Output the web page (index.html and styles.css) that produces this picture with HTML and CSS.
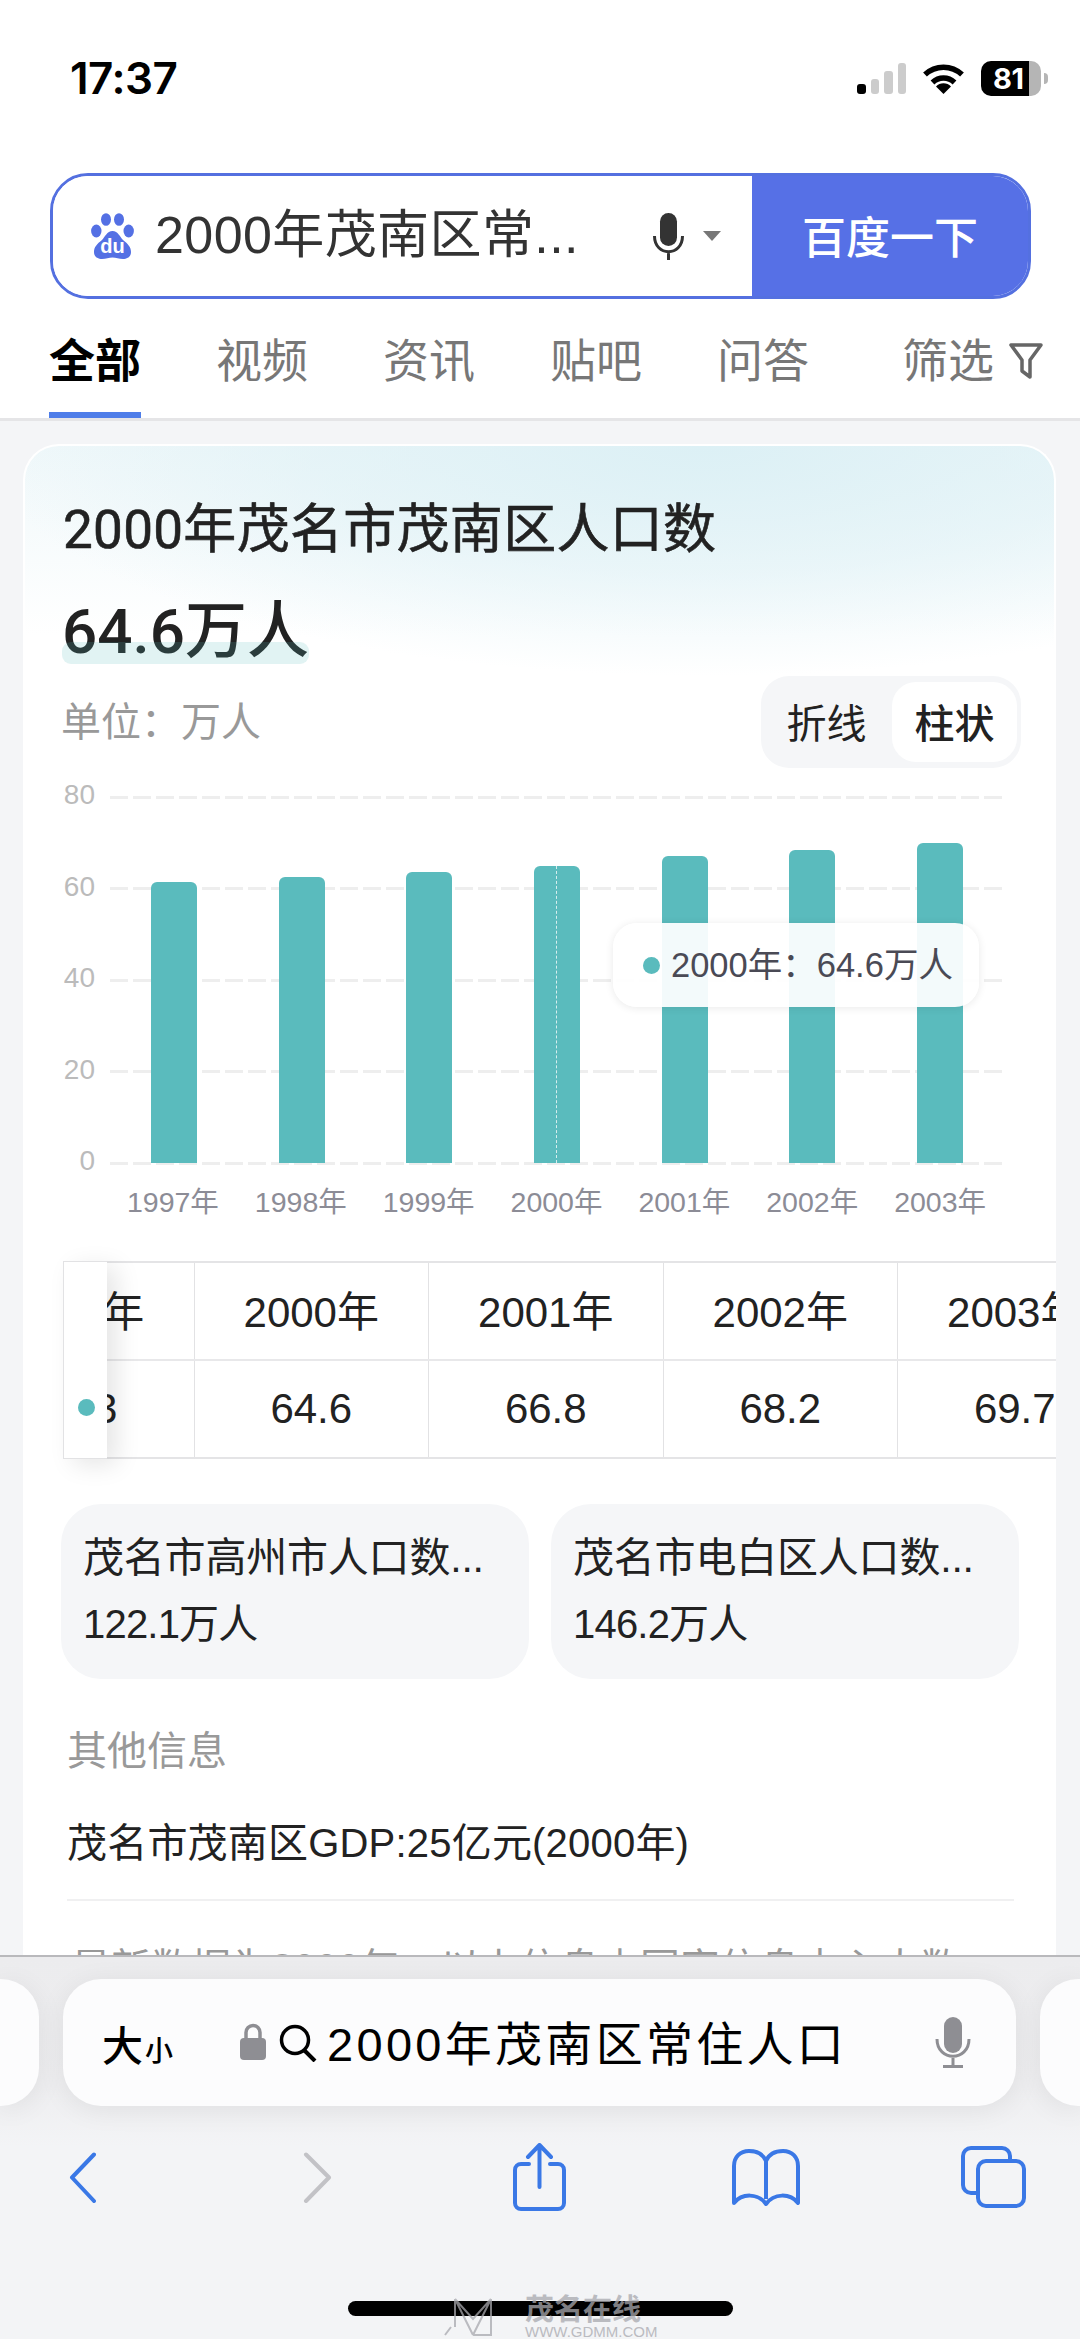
FILE: index.html
```html
<!DOCTYPE html>
<html lang="zh-CN">
<head>
<meta charset="utf-8">
<title>2000年茂南区常住人口</title>
<link rel="stylesheet" href="styles.css">
</head>
<body>
<header class="top">
  <div class="status">
    <span class="time">17:37</span>
    <div class="status-icons">
      <div class="signal"><i class="s1"></i><i class="s2"></i><i class="s3"></i><i class="s4"></i></div>
      <svg class="wifi" viewBox="0 0 43 31"><path d="M3 11.5A27 27 0 0 1 40 11.5M10.500 19.500A16 16 0 0 1 32.500 19.500" fill="none" stroke="#000" stroke-width="5.500"/><path d="M21.500 31L14 23.500A10.500 10.500 0 0 1 29 23.500Z"/></svg>
      <div class="battery"><div class="battery-fill">81</div><div class="battery-rest"></div></div>
      <span class="battery-tip"></span>
    </div>
  </div>
  <div class="search">
    <div class="search-input">
      <svg class="paw" viewBox="0 0 43 46"><g fill="#5470e4"><ellipse cx="15" cy="6.500" rx="5" ry="6.300"/><ellipse cx="28" cy="6.500" rx="5" ry="6.300"/><ellipse cx="5.300" cy="18" rx="5.200" ry="6.500"/><ellipse cx="37.700" cy="18" rx="5.200" ry="6.500"/><path d="M21.500 18C16 18 14 24 11 27C6 31 3 34 3 39C3 44 7 46 11 46C15 46 18 44.500 21.500 44.500C25 44.500 28 46 32 46C36 46 40 44 40 39C40 34 37 31 32 27C29 24 27 18 21.500 18Z"/></g><text class="paw-text" x="21.500" y="40" text-anchor="middle">du</text></svg>
      <span class="search-text">2000年茂南区常...</span>
      <svg class="search-mic" viewBox="0 0 31 47"><rect x="7" y="0" width="17" height="33" rx="8.500" fill="#333"/><path d="M1.500 23C1.500 44 29.500 44 29.500 23M15.500 38V47" fill="none" stroke="#333" stroke-width="3"/></svg>
      <span class="caret"></span>
    </div>
    <div class="search-btn">百度一下</div>
  </div>
  <nav class="tabs">
    <span class="tab tab-active">全部</span>
    <span class="tab">视频</span>
    <span class="tab">资讯</span>
    <span class="tab">贴吧</span>
    <span class="tab">问答</span>
    <span class="tab tab-filter">筛选<svg class="filter" viewBox="0 0 34 37"><path d="M2 3H32L21 18V35L13 29V18Z" fill="none" stroke="#666" stroke-width="3.500" stroke-linejoin="round"/></svg></span>
  </nav>
</header>

<main class="main">
  <section class="card">
    <h1 class="title">2000年茂名市茂南区人口数</h1>
    <div class="value"><span class="value-text">64.6万人</span></div>
    <div class="unit-row">
      <span class="unit">单位：万人</span>
      <div class="toggle"><span class="toggle-item">折线</span><span class="toggle-item toggle-on">柱状</span></div>
    </div>

    <div class="chart">
      <div class="ticks">
        <div class="tick"><span class="tick-label">80</span><span class="tick-line"></span></div>
        <div class="tick"><span class="tick-label">60</span><span class="tick-line"></span></div>
        <div class="tick"><span class="tick-label">40</span><span class="tick-line"></span></div>
        <div class="tick"><span class="tick-label">20</span><span class="tick-line"></span></div>
        <div class="tick"><span class="tick-label">0</span><span class="tick-line"></span></div>
      </div>
      <div class="bars">
        <div class="band"><div class="bar" style="height:281px"></div></div>
        <div class="band"><div class="bar" style="height:286px"></div></div>
        <div class="band"><div class="bar" style="height:291px"></div></div>
        <div class="band"><div class="bar bar-active" style="height:297px"></div></div>
        <div class="band"><div class="bar" style="height:307px"></div></div>
        <div class="band"><div class="bar" style="height:313px"></div></div>
        <div class="band"><div class="bar" style="height:320px"></div></div>
      </div>
      <div class="tooltip"><i class="dot"></i><span class="tooltip-text">2000年：64.6万人</span></div>
    </div>
    <div class="x-labels">
      <span>1997年</span><span>1998年</span><span>1999年</span><span>2000年</span><span>2001年</span><span>2002年</span><span>2003年</span>
    </div>

    <div class="table-box">
      <div class="table-scroll">
        <table class="data">
          <tr class="data-head"><td>1999年</td><td>2000年</td><td>2001年</td><td>2002年</td><td>2003年</td></tr>
          <tr><td>63.3</td><td>64.6</td><td>66.8</td><td>68.2</td><td>69.7</td></tr>
        </table>
      </div>
      <div class="table-sticky"><i class="dot sticky-dot"></i></div>
    </div>

    <div class="related">
      <div class="related-card"><div class="related-line">茂名市高州市人口数...</div><div class="related-line related-num">122.1万人</div></div>
      <div class="related-card"><div class="related-line">茂名市电白区人口数...</div><div class="related-line related-num">146.2万人</div></div>
    </div>

    <h2 class="other-title">其他信息</h2>
    <p class="other-line">茂名市茂南区GDP:25亿元(2000年)</p>
    <div class="divider"></div>
    <p class="source">最新数据为2000年，以上信息由国家信息中心大数</p>
  </section>
</main>

<footer class="safari">
  <div class="pill-row">
    <div class="peek peek-left"></div>
    <div class="pill">
      <span class="aa">大<small>小</small></span>
      <svg class="lock" viewBox="0 0 26 37"><path d="M6 17V9.500a7 7 0 0 1 14 0V17" fill="none" stroke="#8e8e93" stroke-width="3.500"/><rect x="0" y="15" width="26" height="22" rx="4" fill="#8e8e93"/></svg>
      <svg class="mag" viewBox="0 0 38 38"><circle cx="16" cy="16" r="13.500" fill="none" stroke="#000" stroke-width="3.500"/><path d="M25 26L36 37" stroke="#000" stroke-width="4"/></svg>
      <span class="url">2000年茂南区常住人口</span>
      <svg class="pill-mic" viewBox="0 0 36 51"><rect x="9" y="0" width="18" height="36" rx="9" fill="#8e8e93"/><path d="M2 22C2 45 34 45 34 22M18 41V49M8 49.500H28" fill="none" stroke="#8e8e93" stroke-width="3"/></svg>
    </div>
    <div class="peek peek-right"></div>
  </div>
  <div class="nav">
    <svg class="nav-back" viewBox="0 0 27 51"><path d="M25 2.500L3 25.500L25 49" fill="none" stroke="#3a78e6" stroke-width="4" stroke-linecap="round" stroke-linejoin="round"/></svg>
    <svg class="nav-forward" viewBox="0 0 29 51"><path d="M3 2.500L26 25.500L3 49" fill="none" stroke="#c2c2c6" stroke-width="4" stroke-linecap="round" stroke-linejoin="round"/></svg>
    <svg class="nav-share" viewBox="0 0 53 68"><path d="M26.500 44V3M15 14L26.500 2L38 14M16 21H8a6 6 0 0 0-6 6V60a6 6 0 0 0 6 6H45a6 6 0 0 0 6-6V27a6 6 0 0 0-6-6H37" fill="none" stroke="#3a78e6" stroke-width="4" stroke-linecap="round" stroke-linejoin="round"/></svg>
    <svg class="nav-book" viewBox="0 0 68 57"><path d="M34 12C31 5 24 2 17 2C8 2 2 8 2 17V54C10 44 26 44 34 55C42 44 58 44 66 54V17C66 8 60 2 51 2C44 2 37 5 34 12ZM34 12V50" fill="none" stroke="#3a78e6" stroke-width="4" stroke-linejoin="round"/></svg>
    <svg class="nav-tabs" viewBox="0 0 65 62"><path d="M15 47H10a8 8 0 0 1-8-8V10a8 8 0 0 1 8-8H41a8 8 0 0 1 8 8V14" fill="none" stroke="#3a78e6" stroke-width="4"/><rect x="17" y="15" width="46" height="45" rx="8" fill="none" stroke="#3a78e6" stroke-width="4"/></svg>
  </div>
  <div class="home">
    <div class="home-bar"></div>
    <div class="watermark">
      <svg class="wm-logo" viewBox="0 0 64 40"><path d="M4 38L10 30M14 2L32 22L50 2M14 2V30M50 2V38H32M14 2L32 38M50 2L32 38" fill="none" stroke="#a8a8ae" stroke-width="2"/></svg>
      <div class="wm-text"><span class="wm-cn">茂名在线</span><span class="wm-en">WWW.GDMM.COM</span></div>
    </div>
  </div>
</footer>
</body>
</html>
```
FILE: styles.css
```css
* { box-sizing: border-box; }
html, body { margin: 0; padding: 0; }
body {
  width: 1080px;
  height: 2339px;
  overflow: hidden;
  display: flex;
  flex-direction: column;
  background: #f4f5f7;
  font-family: "Liberation Sans", "Noto Sans CJK SC", sans-serif;
  color: #222;
}
h1, h2, p { margin: 0; font-weight: 400; }
i { display: block; font-style: normal; }

/* top */
.top { background: #fff; flex: none; }
.status { height: 156px; padding: 0 32px 0 70px; display: flex; align-items: center; justify-content: space-between; }
.time { font: 600 44px "Inter", sans-serif; color: #000; letter-spacing: -0.5px; }
.status-icons { display: flex; align-items: center; }
.signal { display: flex; align-items: flex-end; gap: 5px; height: 31px; }
.signal i { width: 8.500px; border-radius: 3px; background: #ccc; }
.signal .s1 { height: 10px; background: #000; }
.signal .s2 { height: 15px; }
.signal .s3 { height: 23px; }
.signal .s4 { height: 31px; }
.wifi { width: 43px; height: 31px; margin-left: 16px; }
.battery { margin-left: 16px; width: 60px; height: 35px; border-radius: 10px; overflow: hidden; display: flex; }
.battery-fill { width: 48px; background: #000; color: #fff; font: 700 29px/35px "Inter", sans-serif; padding-left: 12px; letter-spacing: -0.5px; white-space: nowrap; }
.battery-rest { flex: 1; background: #b5b5b5; }
.battery-tip { width: 4px; height: 11px; margin-left: 3px; background: #b5b5b5; border-radius: 0 4px 4px 0; }

.search { margin: 17px 49px 0 50px; height: 126px; border: 3px solid #5470e0; border-radius: 38px; overflow: hidden; display: flex; }
.search-input { width: 699px; display: flex; align-items: center; background: #fff; padding-left: 38px; }
.paw { width: 43px; height: 46px; flex: none; }
.paw-text { font: 700 20px "Liberation Sans", sans-serif; fill: #fff; }
.search-text { margin-left: 21px; width: 480px; font-size: 52px; line-height: 60px; letter-spacing: 0.4px; color: #333; white-space: nowrap; position: relative; top: -1px; }
.search-mic { width: 31px; height: 47px; flex: none; margin-left: 18px; }
.caret { margin-left: 19px; width: 0; height: 0; border-left: 9px solid transparent; border-right: 9px solid transparent; border-top: 10px solid #777; }
.search-btn { flex: 1; background: #5670e6; color: #fff; font-size: 44px; font-weight: 500; display: flex; align-items: center; justify-content: center; padding-bottom: 3px; }

.tabs { height: 122px; padding: 39px 37px 0 49px; border-bottom: 3px solid #e5e5e7; display: flex; gap: 75px; position: relative; }
.tab { font-size: 46px; line-height: 46px; color: #777; position: relative; height: 80px; white-space: nowrap; }
.tab-active { color: #000; font-weight: 700; }
.tab-active::after { content: ""; position: absolute; left: 0; right: 0; bottom: 0; height: 6px; background: #4e7de9; }
.tab-filter { margin-left: auto; display: flex; gap: 15px; }
.filter { width: 34px; height: 37px; margin-top: 4px; }

/* card */
.main { flex: 1; min-height: 0; overflow: hidden; }
.card {
  margin: 23px 24px 0 23px;
  padding: 56px 33px 200px 38px;
  border: 2px solid #fff;
  border-bottom: 0;
  border-radius: 36px 36px 0 0;
  background:
    radial-gradient(ellipse 720px 230px at 66% 0, #dcf0f5 0%, rgba(220, 240, 245, 0.55) 55%, rgba(255, 255, 255, 0) 100%),
    linear-gradient(180deg, #f0f8fa 0, #fff 190px);
  background-color: #fff;
  background-repeat: no-repeat;
}
.title { font-family: "Roboto", "Noto Sans CJK SC", sans-serif; font-weight: 400; -webkit-text-stroke: 0.6px #222; font-size: 53px; line-height: 60px; letter-spacing: 0.3px; color: #222; margin-top: -2px; white-space: nowrap; }
.value { margin-top: 37px; height: 70px; margin-left: -1px; }
.value-text { display: inline-block; position: relative; font-family: "Roboto", "Noto Sans CJK SC", sans-serif; font-size: 62px; line-height: 70px; font-weight: 500; color: #222; white-space: nowrap; }
.value-text::after { content: ""; position: absolute; left: 0; right: 0; bottom: 3px; height: 22px; border-radius: 9px; background: rgba(90, 190, 190, 0.18); }
.unit-row { margin-top: 9px; display: flex; align-items: center; justify-content: space-between; }
.unit { font-size: 40px; color: #999; white-space: nowrap; margin: 0 0 6px -2px; }
.toggle { width: 260px; height: 92px; padding: 6px 4px 6px 0; border-radius: 28px; background: #f5f6f8; display: flex; align-items: stretch; justify-content: space-between; }
.toggle-item { font-size: 40px; display: flex; align-items: center; justify-content: center; width: 131px; color: #222; padding-bottom: 2px; }
.toggle-on { width: 125px; background: #fff; border-radius: 24px; font-weight: 500; }

/* chart */
.chart { margin-top: 29px; height: 366px; position: relative; }
.ticks { height: 100%; display: flex; flex-direction: column; justify-content: space-between; }
.tick { height: 0; display: flex; align-items: center; margin-right: 17px; }
.tick-label { width: 32px; margin-right: 15px; text-align: right; font-size: 28px; line-height: 32px; color: #bbb; position: relative; top: -2px; flex: none; }
.tick-line { flex: 1; height: 3px; background: repeating-linear-gradient(90deg, #eee 0 18px, transparent 18px 23px); }
.bars { position: absolute; left: 47px; right: 17px; top: 0; bottom: 0; display: flex; align-items: flex-end; }
.band { flex: 1; display: flex; justify-content: center; }
.bar { width: 46px; background: #5abbbd; border-radius: 6px 6px 0 0; position: relative; }
.bar-active::after { content: ""; position: absolute; left: 22px; top: 0; bottom: 0; border-left: 1.500px dashed rgba(255, 255, 255, 0.75); }
.tooltip { position: absolute; left: 550px; top: 126px; width: 366px; height: 84px; border-radius: 24px; background: rgba(255, 255, 255, 0.93); box-shadow: 0 1px 8px rgba(0, 0, 0, 0.09); display: flex; align-items: center; padding-left: 30px; gap: 11px; font-size: 34.500px; color: #4a4a55; white-space: nowrap; }
.tooltip-text { position: relative; top: -3px; }
.dot { width: 17px; height: 17px; border-radius: 50%; background: #5abbbd; flex: none; }
.x-labels { margin: 21px 17px 0 46px; display: flex; }
.x-labels span { flex: 1; text-align: center; font-size: 28.500px; line-height: 36px; color: #8c8c96; white-space: nowrap; }

/* table */
.table-box { margin: 41px -35px 0 0; position: relative; height: 198px; }
.table-scroll { height: 100%; overflow: hidden; border-top: 2px solid #e4e4e6; border-bottom: 2px solid #e4e4e6; }
.data { border-collapse: collapse; table-layout: fixed; width: 1172.500px; margin-left: -103.500px; }
.data td { width: 234.500px; height: 97px; padding: 0; text-align: center; font-size: 42px; color: #222; border-right: 1px solid #e2e2e4; white-space: nowrap; }
.data tr + tr td { border-top: 2px solid #e8e8ea; }
.data-head td { padding-bottom: 5px; }
.table-sticky { position: absolute; left: 0; top: 0; bottom: 0; width: 44px; background: #fff; border: 1px solid #e2e2e4; border-right: 0; box-shadow: 10px 6px 24px rgba(0, 0, 0, 0.1); display: flex; align-items: flex-end; }
.sticky-dot { margin: 0 0 42px 14px; }

/* related */
.related { margin: 45px 2px 0 -2px; display: grid; grid-template-columns: 468px 468px; gap: 22px; }
.related-card { height: 175px; padding: 21px 0 0 22px; border-radius: 40px; background: #f5f6f8; }
.related-line { font-size: 41px; line-height: 66px; letter-spacing: -0.2px; color: #222; white-space: nowrap; }
.related-num { font-size: 40px; letter-spacing: -0.8px; }

/* others */
.other-title { margin: 47px 0 0 4px; font-size: 40px; line-height: 50px; color: #999; }
.other-line { margin: 42px 0 0 4px; font-size: 40px; line-height: 50px; letter-spacing: 0.2px; color: #222; white-space: nowrap; }
.divider { margin: 31px 7px 0 4px; height: 2px; background: #f0f0f1; }
.source { margin: 42px 0 0 8px; font-size: 40px; line-height: 50px; color: #999; white-space: nowrap; overflow: hidden; }

/* safari chrome */
.safari { flex: none; height: 384px; border-top: 2px solid #b9b9bc; background: linear-gradient(180deg, #ececee 0, #eeeef0 130px, #f3f4f6 190px); }
.pill-row { margin-top: 22px; height: 127px; display: flex; gap: 24px; }
.peek { flex: none; height: 127px; background: #fcfcfd; box-shadow: 0 4px 28px rgba(0, 0, 0, 0.07); }
.peek-left { width: 39px; border-radius: 0 38px 38px 0; }
.peek-right { width: 40px; border-radius: 38px 0 0 38px; }
.pill { flex: none; width: 953px; height: 127px; background: #fcfcfd; border-radius: 38px; box-shadow: 0 4px 28px rgba(0, 0, 0, 0.07); display: flex; align-items: center; padding-left: 39px; }
.aa { width: 138px; font-size: 41px; font-weight: 500; color: #000; white-space: nowrap; flex: none; }
.aa small { font-size: 28px; margin-left: 2px; }
.lock { width: 26px; height: 37px; flex: none; margin-top: -3px; }
.mag { width: 38px; height: 38px; flex: none; margin: 0 0 0 13px; }
.url { margin-left: 10px; width: 608px; flex: none; font-size: 47px; letter-spacing: 3.300px; color: #000; white-space: nowrap; position: relative; top: -2px; }
.pill-mic { width: 36px; height: 51px; flex: none; margin-left: 0; }

.nav { margin-top: 36px; height: 70px; padding-left: 69px; display: flex; align-items: center; }
.nav svg { flex: none; }
.nav-back { width: 27px; height: 51px; }
.nav-forward { width: 29px; height: 51px; margin-left: 207px; }
.nav-share { width: 53px; height: 68px; margin-left: 181px; }
.nav-book { width: 68px; height: 57px; margin-left: 166px; }
.nav-tabs { width: 65px; height: 62px; margin-left: 161px; }

.home { position: relative; margin-top: 89px; padding-left: 348px; }
.home-bar { width: 385px; height: 15px; border-radius: 8px; background: #000; }
.watermark { position: absolute; left: 441px; top: -4px; display: flex; gap: 20px; opacity: 0.75; }
.wm-logo { width: 64px; height: 40px; flex: none; }
.wm-text { display: flex; flex-direction: column; }
.wm-cn { font-size: 29px; line-height: 26px; font-weight: 700; color: #a8a8ae; white-space: nowrap; }
.wm-en { font-size: 15px; line-height: 14px; margin-top: 2px; color: #a8a8ae; white-space: nowrap; }
```
